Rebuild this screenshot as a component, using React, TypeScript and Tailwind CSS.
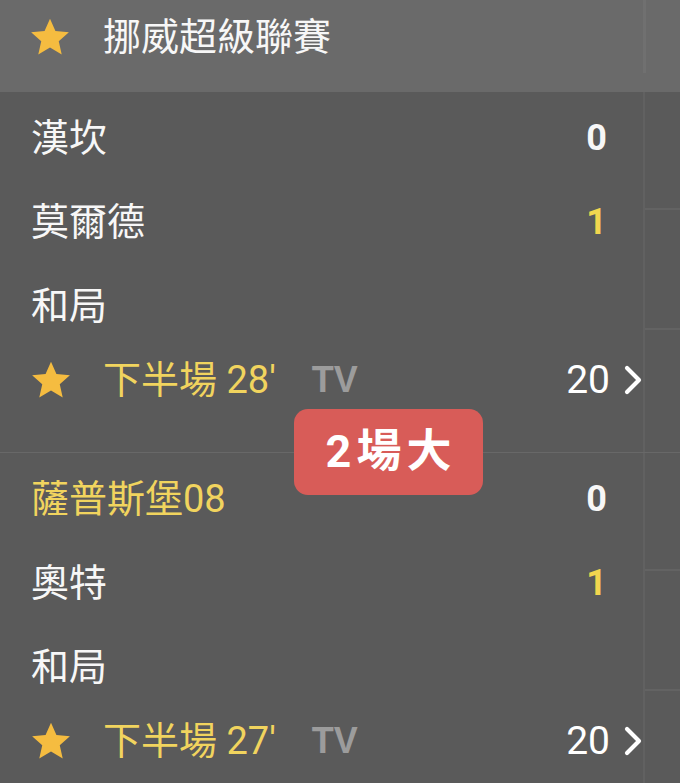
import React from "react";

const FONT = { fontFamily: '"Roboto", "Noto Sans CJK TC", sans-serif' };

function Star({ className = "" }: { className?: string }) {
  return (
    <svg viewBox="0 0 24 24" className={className}>
      <polygon
        points="12,1.5 15.1,8.6 22.8,9.3 17,14.4 18.7,22 12,18 5.3,22 7,14.4 1.2,9.3 8.9,8.6"
        fill="#f5bc40"
        strokeLinejoin="round"
      />
    </svg>
  );
}

function Chevron() {
  return (
    <svg viewBox="0 0 18 30" className="w-[18px] h-[30px]">
      <path d="M3 3 L15 15 L3 27" stroke="#ffffff" strokeWidth="4.2" fill="none" strokeLinecap="round" strokeLinejoin="round" />
    </svg>
  );
}

type Match = {
  home: string;
  homeYellow?: boolean;
  away: string;
  homeScore: string;
  awayScore: string;
  time: string;
};

function MatchBlock({ m }: { m: Match }) {
  return (
    <div className="flex border-b border-[#686868]">
      <div className="w-[643px] flex flex-col pt-1 pb-[40px]">
        <div className="h-[84px] flex items-center justify-between pl-[31px] pr-[36px]">
          <span className={`text-[38px] ${m.homeYellow ? "text-[#f1d45e]" : "text-[#f7f7f7]"}`}>{m.home}</span>
          <span className="text-[36px] font-bold text-[#f7f7f7]">{m.homeScore}</span>
        </div>
        <div className="h-[84px] flex items-center justify-between pl-[31px] pr-[36px]">
          <span className="text-[38px] text-[#f7f7f7]">{m.away}</span>
          <span className="text-[36px] font-bold text-[#f2d64f]">{m.awayScore}</span>
        </div>
        <div className="h-[84px] flex items-center pl-[31px]">
          <span className="text-[38px] text-[#f7f7f7]">和局</span>
        </div>
        <div className="h-[64px] flex items-center pl-[30px] pr-[1px]">
          <Star className="w-[42px] h-[42px]" />
          <span className="ml-[31px] text-[38px] text-[#f1d45e]">{m.time}</span>
          <span className="ml-[36px] text-[36px] font-bold text-[#9c9c9c]" style={{ fontFamily: '"Liberation Sans", sans-serif' }}>TV</span>
          <span className="ml-auto text-[39px] text-[#ffffff]">20</span>
          <span className="ml-[14px] flex items-center"><Chevron /></span>
        </div>
      </div>
      <div className="w-[2px] bg-[#616161]" />
      <div className="flex-1 flex flex-col">
        <div className="h-[118px] border-b-2 border-[#636363]" />
        <div className="h-[120px] border-b-2 border-[#636363]" />
        <div className="flex-1" />
      </div>
    </div>
  );
}

export default function App() {
  const matches: Match[] = [
    { home: "漢坎", away: "莫爾德", homeScore: "0", awayScore: "1", time: "下半場 28'" },
    { home: "薩普斯堡08", homeYellow: true, away: "奧特", homeScore: "0", awayScore: "1", time: "下半場 27'" },
  ];
  return (
    <div className="relative w-[680px] h-[783px] overflow-hidden bg-[#5a5a5a]" style={FONT}>
      <div className="h-[92px] bg-[#6a6a6a] flex items-start">
        <div className="w-[643px] h-[74px] flex items-center pl-[29px]">
          <Star className="w-[42px] h-[42px]" />
          <span className="ml-[32px] text-[38px] text-[#f7f7f7]">挪威超級聯賽</span>
        </div>
        <div className="w-[3px] h-[73px] bg-[#707070]" />
      </div>
      {matches.map((m, i) => (
        <MatchBlock key={i} m={m} />
      ))}
      <div className="absolute left-[294px] top-[409px] w-[189px] h-[86px] rounded-[14px] bg-[#d85c58] flex items-center justify-center">
        <span className="text-[45px] font-bold text-white tracking-[5px] pl-[5px]">2場大</span>
      </div>
    </div>
  );
}
